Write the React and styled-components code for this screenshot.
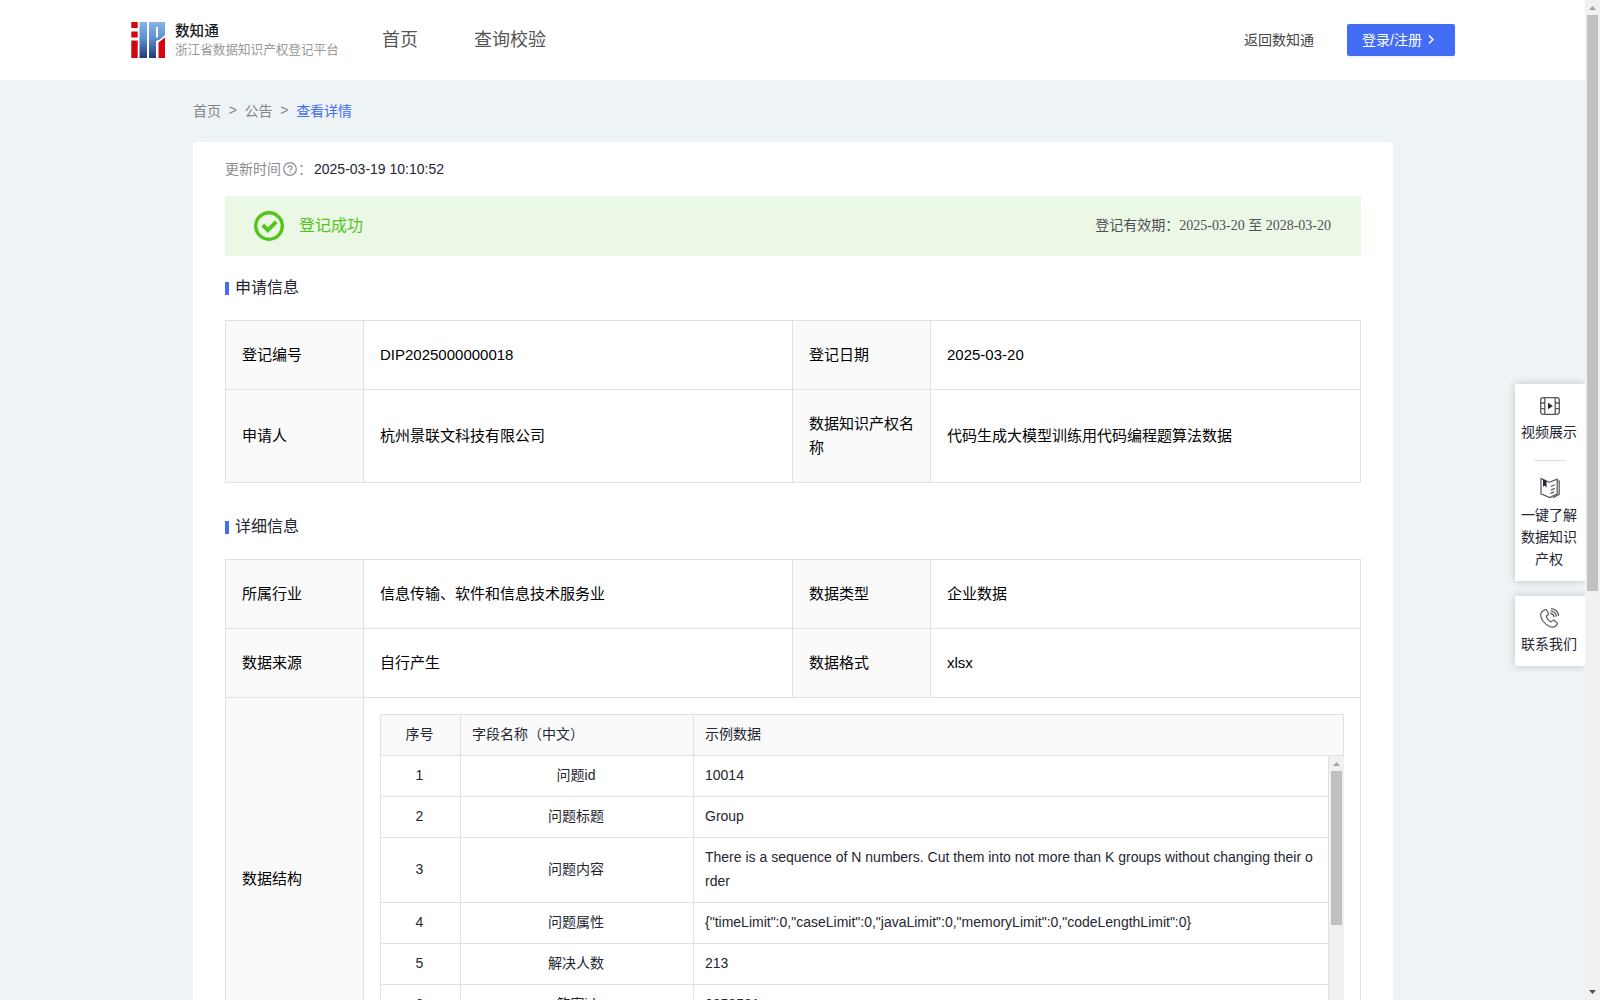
import styled, { createGlobalStyle } from "styled-components";

const GlobalStyle = createGlobalStyle`
    * {
        box-sizing: border-box;
    }

    body {
        margin: 0;
        background: #eef3f6;
        font-family: "Liberation Sans", "Noto Sans CJK SC", sans-serif;
        font-size: 14px;
        color: #252631;
    }
`;

const Wrapper = styled.div`
    width: 1600px;
    height: 1000px;
    display: flex;
    overflow: hidden;
    position: relative;
    background: #eef3f6;
`;

const Page = styled.div`
    width: 1585px;
    height: 1000px;
    flex-shrink: 0;
    overflow: hidden;
`;

const Header = styled.header`
    height: 80px;
    padding: 0 130px 0 131px;
    display: flex;
    align-items: center;
    background: #ffffff;
`;

const Logo = styled.div`
    width: 251px;
    display: flex;
    align-items: center;
    gap: 9px;
`;

const LogoText = styled.div`
    white-space: nowrap;
`;

const LogoTitle = styled.div`
    font-size: 14.6px;
    font-weight: 500;
    line-height: 20px;
    color: #17181c;
`;

const LogoSub = styled.div`
    font-size: 12.6px;
    line-height: 19px;
    color: #999999;
`;

const Nav = styled.nav`
    flex: 1;
    display: flex;
    gap: 56px;
    font-size: 18px;
    line-height: 26px;
    color: #555555;
`;

const BackLink = styled.a`
    margin-right: 33px;
    padding-bottom: 1px;
    line-height: 22px;
    color: #444444;
`;

const LoginButton = styled.button`
    width: 108px;
    height: 32px;
    padding: 0 0 3px 15px;
    display: flex;
    align-items: center;
    gap: 2px;
    border: 0;
    border-radius: 2px;
    background: #446df6;
    box-shadow: 0 2px 0 rgba(0, 0, 0, 0.045);
    color: #ffffff;
    font-family: inherit;
    font-size: 14px;
    white-space: nowrap;
`;

const Container = styled.main`
    width: 1200px;
    margin: 0 auto 0 193px;
`;

const Breadcrumb = styled.div`
    height: 62px;
    padding-bottom: 3px;
    display: flex;
    align-items: center;
    gap: 7.700px;
    color: #858585;
`;

const Current = styled.span`
    color: #446df6;
`;

const Card = styled.section`
    height: 980px;
    padding: 16px 32px;
    border-radius: 4px;
    background: #ffffff;
`;

const UpdateTime = styled.div`
    height: 22px;
    display: flex;
    align-items: center;
    color: #8c8d94;

    svg {
        margin: 0 1px 0 2px;
    }
`;

const TimeLabel = styled.span`
    padding-bottom: 2px;
`;

const Time = styled.span`
    margin-left: 2px;
    color: #252631;
`;

const Banner = styled.div`
    height: 60px;
    margin-top: 16px;
    padding: 0 29px;
    display: flex;
    align-items: center;
    background: #ecf8e6;
`;

const BannerStatus = styled.div`
    flex: 1;
    padding: 0 0 4px 15px;
    font-size: 16px;
    color: #52c41a;
`;

const Validity = styled.div`
    padding: 0 1px 4px 0;
    font-family: "Liberation Serif", "Noto Sans CJK SC", serif;
    color: #4e5155;
`;

const SectionTitle = styled.h3`
    height: 22px;
    margin: ${({ $top }) => $top}px 0 21px;
    display: flex;
    align-items: center;
    gap: 6px;
    font-size: 16px;
    font-weight: 400;
    line-height: 22px;

    &::before {
        content: "";
        width: 4px;
        height: 13px;
        margin-top: 1px;
        background: #446df6;
    }
`;

const Table = styled.div`
    width: 1136px;
    display: grid;
    grid-template-columns: 138px 429px 138px 430px;
    border-top: 1px solid #e1e1e1;
    border-left: 1px solid #e1e1e1;
`;

const Cell = styled.div`
    height: ${({ $height }) => $height || 69}px;
    padding: 0 14px 1px 16px;
    display: flex;
    align-items: center;
    border-right: 1px solid #e1e1e1;
    border-bottom: 1px solid #e1e1e1;
    background: #ffffff;
    font-size: 15px;
    line-height: 24px;
    color: #000000;
`;

const LabelCell = styled(Cell)`
    background: #fafafa;
`;

const StructCell = styled(Cell)`
    grid-column: 2 / 5;
    padding: 16px;
    align-items: flex-start;
`;

const Struct = styled.div`
    width: 964px;
    height: 330px;
    font-size: 14px;
    color: #252631;
    border-top: 1px solid #e1e1e1;
    border-left: 1px solid #e1e1e1;
`;

const StructRow = styled.div`
    display: grid;
    grid-template-columns: 80px 233px 1fr;
`;

const StructTd = styled.div`
    padding: 7px 13px 9px 11px;
    display: flex;
    align-items: center;
    justify-content: ${({ $center }) => ($center ? "center" : "flex-start")};
    border-right: 1px solid #e1e1e1;
    border-bottom: 1px solid #e1e1e1;
    line-height: 24px;
    word-break: break-all;
`;

const StructTh = styled(StructTd)`
    background: #fafafa;
`;

const StructBody = styled.div`
    height: 288px;
    display: flex;
    overflow: hidden;
`;

const StructRows = styled.div`
    width: 948px;
`;

const Scrollbar = styled.div`
    width: 15px;
    height: 100%;
    flex-shrink: 0;
    padding: 6px 0;
    display: flex;
    flex-direction: column;
    align-items: center;
    background: #f1f1f1;
`;

const Thumb = styled.div`
    width: 11px;
    height: ${({ $height }) => $height}px;
    margin: 5px 0 auto;
    background: #c1c1c1;
`;

const SideBar = styled.aside`
    width: 70px;
    display: flex;
    flex-direction: column;
    gap: 15px;
    position: absolute;
    top: 384px;
    left: 1515px;
    clip-path: inset(-20px 0 -20px -20px);
`;

const SidePanel = styled.div`
    height: ${({ $height }) => $height}px;
    display: flex;
    flex-direction: column;
    align-items: center;
    background: #ffffff;
    box-shadow: 0 0 8px rgba(0, 0, 0, 0.2);
`;

const SideItem = styled.div`
    width: 58px;
    padding: 11px 2px 0 0;
    text-align: center;
    line-height: 22px;

    svg {
        display: block;
        margin: 0 0 ${({ $gap }) => $gap || 4}px 19px;
    }
`;

const SideLine = styled.div`
    width: 32px;
    height: 1px;
    margin: 17px 0 5px;
    background: #dddddd;
`;

function LogoIcon() {
    return (
        <svg width="35" height="36" viewBox="0 0 35 36">
            <defs>
                <linearGradient id="logoBlue" x1="0" y1="0" x2="0" y2="1">
                    <stop offset="0" stopColor="#86b4e8" />
                    <stop offset="0.45" stopColor="#5f91d0" />
                    <stop offset="1" stopColor="#24377e" />
                </linearGradient>
            </defs>
            <path d="M0.300 0h6.400v6h-6.400zM0.300 9.500h6.400v6h-6.400zM0.300 18.500h6.400v17.500h-6.400z" fill="#d2060d" />
            <path d="M8.500 0h7.500v36H8.500z" fill="url(#logoBlue)" />
            <path d="M18 0h16v13l-5 4.500-4 1.500V36h-7z" fill="url(#logoBlue)" />
            <path d="M25 5h2v10l-2 1z" fill="#ffffff" />
            <path d="M27.500 20.500 34 15.500V36h-6.500z" fill="#d2060d" />
        </svg>
    );
}

function ArrowIcon() {
    return (
        <svg width="14" height="14" viewBox="0 0 14 14" fill="none" stroke="#ffffff" strokeWidth="1.5">
            <path d="M5 3.500l4 4-4 4" />
        </svg>
    );
}

function QuestionIcon() {
    return (
        <svg width="14" height="14" viewBox="0 0 14 14" fill="none" stroke="#8c8d94" strokeWidth="1.2">
            <circle cx="7" cy="7" r="6.3" />
            <path d="M5 5.8C5 3.2 9 3.2 9 5.7 9 7 7 7 7 8.6M7 9.6v1.2" />
        </svg>
    );
}

function SuccessIcon() {
    return (
        <svg width="30" height="30" viewBox="0 0 30 30" fill="none" stroke="#52c41a">
            <circle cx="15" cy="15" r="13.3" strokeWidth="3.4" />
            <path d="M8.8 14.200l5 5 8.400-8.300" strokeWidth="4" />
        </svg>
    );
}

function VideoIcon() {
    return (
        <svg width="20" height="22" viewBox="0 0 20 22" fill="none" stroke="#55565e" strokeWidth="1.3">
            <rect x="0.7" y="2.7" width="18.6" height="16.6" rx="2.5" />
            <path d="M4.8 3v16M15.2 3v16M1 8h3.5M1 13.7h3.5M15.5 8H19M15.5 13.7H19" />
            <path d="M8 7.7v6.6l4.8-3.3z" fill="#252631" stroke="none" />
        </svg>
    );
}

function BookIcon() {
    return (
        <svg width="20" height="22" viewBox="0 0 20 22" fill="none" stroke="#55565e" strokeWidth="1.2">
            <path d="M9.2 5.3 1 1.5v15.3l8.8 3.7 7.4-3.7V2.2L9.2 5.3" />
            <path d="M17.3 4h1.9v13.4l-6.3 3.2" />
            <path d="M10.8 9.5l4-1.8M10.8 13.2l4-1.8M10.3 16.5l3.8-1.6" />
            <path d="M3 2.2v7.6l1.8-1.2 1.7 2.2V4z" fill="#252631" stroke="none" />
        </svg>
    );
}

function PhoneIcon() {
    return (
        <svg width="20" height="22" viewBox="0 0 20 21" fill="none" stroke="#55565e" strokeWidth="1.2">
            <path d="M2.7 3.5 5 2.2c.7-.4 1.3-.2 1.7.5L8.3 5.7c.4.7.2 1.3-.4 1.7L6.4 8.5c.3 2.4 2.3 4.9 4.7 5.9l1.5-1.3c.5-.5 1.2-.5 1.7-.1l2.7 2.1c.6.5.7 1.1.2 1.700-2 3-4.900 3.500-8 1.900C4.600 16.500 1 12 .7 7.800c-.1-1.800.6-3.300 2-4.300z" />
            <path d="M10.2 5.7c2.100.4 3.600 1.900 4 4M10.700 3.400c3.200.4 5.300 2.600 5.700 5.700M11 1.200c4.200.3 7.100 3.100 7.600 7.200" />
        </svg>
    );
}

function ScrollArrow({ down }) {
    return (
        <svg width="7" height="4" viewBox="0 0 7 4">
            {down ? <path d="M0 0h7L3.5 4z" fill="#505050" /> : <path d="M0 4h7L3.5 0z" fill="#a3a3a3" />}
        </svg>
    );
}

const fields = [
    ["1", "问题id", "10014"],
    ["2", "问题标题", "Group"],
    ["3", "问题内容", "There is a sequence of N numbers. Cut them into not more than K groups without changing their order"],
    ["4", "问题属性", '{"timeLimit":0,"caseLimit":0,"javaLimit":0,"memoryLimit":0,"codeLengthLimit":0}'],
    ["5", "解决人数", "213"],
    ["6", "答案id", "2858581"],
];

export default function App() {
    return (
        <>
            <GlobalStyle />
            <Wrapper>
                <Page>
                    <Header>
                        <Logo>
                            <LogoIcon />
                            <LogoText>
                                <LogoTitle>数知通</LogoTitle>
                                <LogoSub>浙江省数据知识产权登记平台</LogoSub>
                            </LogoText>
                        </Logo>
                        <Nav>
                            <span>首页</span>
                            <span>查询校验</span>
                        </Nav>
                        <BackLink>返回数知通</BackLink>
                        <LoginButton>
                            登录/注册
                            <ArrowIcon />
                        </LoginButton>
                    </Header>
                    <Container>
                        <Breadcrumb>
                            <span>首页</span>
                            <span>&gt;</span>
                            <span>公告</span>
                            <span>&gt;</span>
                            <Current>查看详情</Current>
                        </Breadcrumb>
                        <Card>
                            <UpdateTime>
                                <TimeLabel>更新时间</TimeLabel>
                                <QuestionIcon />
                                <TimeLabel>：</TimeLabel>
                                <Time>2025-03-19 10:10:52</Time>
                            </UpdateTime>
                            <Banner>
                                <SuccessIcon />
                                <BannerStatus>登记成功</BannerStatus>
                                <Validity>登记有效期：2025-03-20 至 2028-03-20</Validity>
                            </Banner>

                            <SectionTitle $top={21}>申请信息</SectionTitle>
                            <Table>
                                <LabelCell>登记编号</LabelCell>
                                <Cell>DIP2025000000018</Cell>
                                <LabelCell>登记日期</LabelCell>
                                <Cell>2025-03-20</Cell>
                                <LabelCell $height={93}>申请人</LabelCell>
                                <Cell $height={93}>杭州景联文科技有限公司</Cell>
                                <LabelCell $height={93}>数据知识产权名称</LabelCell>
                                <Cell $height={93}>代码生成大模型训练用代码编程题算法数据</Cell>
                            </Table>

                            <SectionTitle $top={33}>详细信息</SectionTitle>
                            <Table>
                                <LabelCell>所属行业</LabelCell>
                                <Cell>信息传输、软件和信息技术服务业</Cell>
                                <LabelCell>数据类型</LabelCell>
                                <Cell>企业数据</Cell>
                                <LabelCell>数据来源</LabelCell>
                                <Cell>自行产生</Cell>
                                <LabelCell>数据格式</LabelCell>
                                <Cell>xlsx</Cell>
                                <LabelCell $height={363}>数据结构</LabelCell>
                                <StructCell $height={363}>
                                    <Struct>
                                        <StructRow>
                                            <StructTh $center>序号</StructTh>
                                            <StructTh>字段名称（中文）</StructTh>
                                            <StructTh>示例数据</StructTh>
                                        </StructRow>
                                        <StructBody>
                                            <StructRows>
                                                {fields.map(([no, name, sample]) => (
                                                    <StructRow key={no}>
                                                        <StructTd $center>{no}</StructTd>
                                                        <StructTd $center>{name}</StructTd>
                                                        <StructTd>{sample}</StructTd>
                                                    </StructRow>
                                                ))}
                                            </StructRows>
                                            <Scrollbar>
                                                <ScrollArrow />
                                                <Thumb $height={154} />
                                                <ScrollArrow down />
                                            </Scrollbar>
                                        </StructBody>
                                    </Struct>
                                </StructCell>
                            </Table>
                        </Card>
                    </Container>
                </Page>
                <Scrollbar>
                    <ScrollArrow />
                    <Thumb $height={576} />
                    <ScrollArrow down />
                </Scrollbar>
                <SideBar>
                    <SidePanel $height={197}>
                        <SideItem>
                            <VideoIcon />
                            视频展示
                        </SideItem>
                        <SideLine />
                        <SideItem $gap={5}>
                            <BookIcon />
                            一键了解数据知识产权
                        </SideItem>
                    </SidePanel>
                    <SidePanel $height={70}>
                        <SideItem>
                            <PhoneIcon />
                            联系我们
                        </SideItem>
                    </SidePanel>
                </SideBar>
            </Wrapper>
        </>
    );
}
